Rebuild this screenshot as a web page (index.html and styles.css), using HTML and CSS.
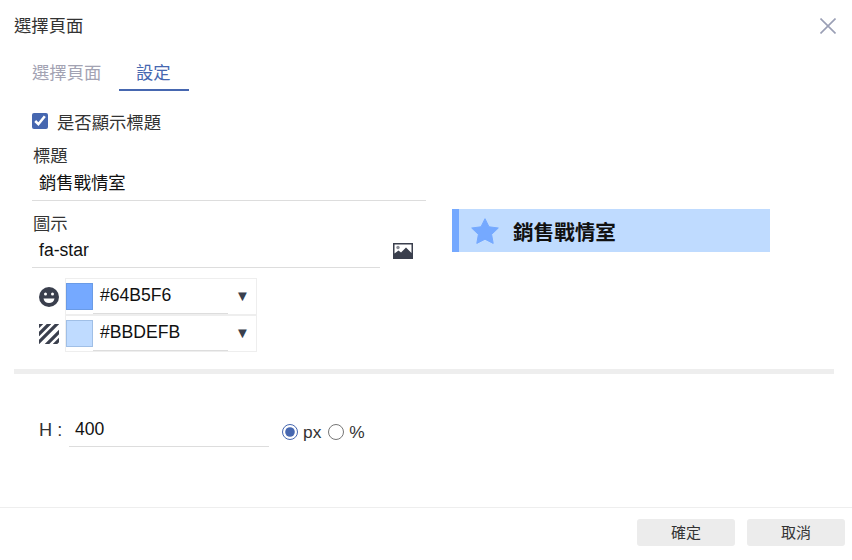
FILE: index.html
```html
<!DOCTYPE html>
<html lang="zh-Hant">
<head>
    <meta charset="UTF-8">
    <meta name="viewport" content="width=device-width, initial-scale=1.0">
    <title>選擇頁面</title>
    <link rel="stylesheet" href="styles.css">
</head>
<body>
    <div class="dialog">
        <div class="dialog-header">
            <span class="dialog-title">選擇頁面</span>
            <svg class="close-icon" viewBox="0 0 16 16" width="16" height="16">
                <path d="M0.5 0.5 L15.5 15.5 M15.5 0.5 L0.5 15.5" fill="none" stroke="#9a9fb5" stroke-width="1.6"/>
            </svg>
        </div>

        <div class="tabs">
            <div class="tab">選擇頁面</div>
            <div class="tab active">設定</div>
        </div>

        <div class="settings">
            <div class="settings-form">
                <label class="check-row">
                    <input type="checkbox" checked>
                    <span>是否顯示標題</span>
                </label>

                <div class="field-label title-label">標題</div>
                <div class="field-value title-value">銷售戰情室</div>

                <div class="field-label icon-label">圖示</div>
                <div class="icon-row">
                    <div class="field-value icon-value">fa-star</div>
                    <svg class="picture-icon" viewBox="0 0 20 16" width="20" height="16">
                        <path fill-rule="evenodd" fill="#3a3f4d" d="M0 0H20V16H0Z M1.5 1.5V10.5L5.5 7.5L8 9.5L13 4.5L18.5 10V1.5Z"/>
                        <circle cx="5" cy="4.5" r="1.7" fill="#8a8d96"/>
                    </svg>
                </div>

                <div class="color-rows">
                    <div class="color-row">
                        <svg class="color-icon" viewBox="0 0 20 20" width="20" height="20">
                            <circle cx="10" cy="10" r="10" fill="#3a3f4d"/>
                            <circle cx="6.5" cy="7" r="1.5" fill="#fff"/>
                            <circle cx="13.5" cy="7" r="1.5" fill="#fff"/>
                            <path d="M4.5 11.5H15.5C15 14.8 12.8 16 10 16C7.2 16 5 14.8 4.5 11.5Z" fill="#fff"/>
                        </svg>
                        <div class="color-picker">
                            <div class="swatch swatch-fg"></div>
                            <div class="color-value">#64B5F6</div>
                            <div class="color-arrow">▼</div>
                        </div>
                    </div>
                    <div class="color-row">
                        <svg class="color-icon" viewBox="0 0 20 20" width="20" height="20">
                            <path d="M-2 4L4 -2M-1 11L11 -1M-1 19L19 -1M6 22L22 6M14 22L22 14" stroke="#3a3f4d" stroke-width="3.2" fill="none"/>
                        </svg>
                        <div class="color-picker">
                            <div class="swatch swatch-bg"></div>
                            <div class="color-value">#BBDEFB</div>
                            <div class="color-arrow">▼</div>
                        </div>
                    </div>
                </div>
            </div>

            <div class="preview">
                <svg class="preview-star" viewBox="0 0 28 26" width="28" height="26">
                    <path fill="#75a9ff" stroke="#75a9ff" stroke-width="1" stroke-linejoin="round" d="M14 0.7L18 8.8L27.3 10L20.6 16.4L22.2 25.4L14 21.2L5.8 25.4L7.4 16.4L0.7 10L10 8.8Z"/>
                </svg>
                <span class="preview-title">銷售戰情室</span>
            </div>
        </div>

        <div class="divider"></div>

        <div class="height-row">
            <span class="height-label">H :</span>
            <div class="field-value height-value">400</div>
            <label class="unit"><input type="radio" name="unit" checked><span>px</span></label>
            <label class="unit"><input type="radio" name="unit"><span>%</span></label>
        </div>

        <div class="dialog-footer">
            <button class="btn">確定</button>
            <button class="btn">取消</button>
        </div>
    </div>
</body>
</html>
```

FILE: styles.css
```css
* {
    margin: 0;
    padding: 0;
    box-sizing: border-box;
    font-family: "Liberation Sans", "Noto Sans CJK TC", sans-serif;
}

body {
    background-color: #fff;
    color: #333;
    font-size: 17.33px;
}

.dialog {
    width: 852px;
    height: 560px;
    display: flex;
    flex-direction: column;
}

.dialog-header {
    display: flex;
    justify-content: space-between;
    align-items: center;
    height: 52px;
    padding: 0 16px 0 14px;
}

.dialog-title {
    padding-bottom: 4px;
}

.tabs {
    display: flex;
    height: 39px;
    margin-left: 14px;
}

.tab {
    width: 105px;
    padding: 7px 0 0 18px;
    color: #a3a3b3;
}

.tab.active {
    width: 70px;
    padding-left: 17px;
    color: #4667b0;
    border-bottom: 2px solid #4667b0;
}

.settings {
    display: flex;
    margin-top: 19px;
    padding-left: 32px;
}

.settings-form {
    width: 394px;
}

.check-row {
    display: flex;
    align-items: center;
    height: 22px;
}

.check-row input {
    width: 16px;
    height: 16px;
    margin-right: 9px;
    accent-color: #4667b0;
}

.field-label {
    line-height: 22px;
}

.title-label {
    margin-top: 13px;
    padding-left: 1px;
}

.field-value {
    color: #111;
    padding-left: 7px;
    border-bottom: 1px solid #ddd;
}

.title-value {
    height: 34px;
    line-height: 32px;
}

.icon-label {
    margin-top: 12px;
    padding-left: 1px;
}

.icon-row {
    display: flex;
    align-items: center;
}

.icon-value {
    width: 348px;
    height: 33px;
    font-size: 17.6px;
    line-height: 30px;
}

.picture-icon {
    margin: -2px 0 0 13px;
}

.color-rows {
    margin-top: 10px;
}

.color-row {
    display: flex;
    align-items: center;
}

.color-icon {
    margin: 0 6px 0 7px;
}

.color-picker {
    display: flex;
    width: 192px;
    height: 37px;
    border: 1px solid #eee;
    padding-top: 4px;
}

.swatch {
    width: 27px;
    height: 27px;
    border: 1px solid;
}

.swatch-fg {
    background-color: #75a9ff;
    border-color: #6a9be6;
}

.swatch-bg {
    background-color: #bfdbff;
    border-color: #a0bfe6;
}

.color-value {
    width: 135px;
    height: 31px;
    padding: 1px 0 0 7px;
    color: #111;
    font-size: 17.6px;
    line-height: 22px;
    border-bottom: 1px solid #ddd;
}

.color-arrow {
    margin-left: 7px;
    color: #3a3f4d;
    font-size: 15px;
    line-height: 26px;
}

.preview {
    display: flex;
    align-items: center;
    width: 318px;
    height: 43px;
    margin: 99px 0 0 26px;
    background-color: #bfdbff;
    border-left: 7px solid #75a9ff;
    padding-left: 12px;
}

.preview-title {
    margin-left: 14px;
    color: #111;
    font-size: 20.6px;
    font-weight: bold;
}

.divider {
    height: 5px;
    margin: 17px 18px 0 14px;
    background-color: #eee;
}

.height-row {
    display: flex;
    align-items: center;
    height: 112px;
    padding-left: 39px;
}

.height-label {
    width: 30px;
    font-size: 18.2px;
}

.height-value {
    width: 200px;
    height: 34px;
    padding-left: 6px;
    font-size: 17.6px;
    line-height: 32px;
}

.unit {
    display: flex;
    align-items: center;
    margin: 4px 0 0 13px;
}

.unit + .unit {
    margin-left: 7px;
}

.unit input {
    width: 16px;
    height: 16px;
    margin-right: 5px;
    accent-color: #4667b0;
}

.dialog-footer {
    display: flex;
    justify-content: flex-end;
    gap: 12px;
    margin-top: auto;
    height: 53px;
    padding: 11px 7px 0 0;
    border-top: 1px solid #eee;
}

.btn {
    width: 98px;
    height: 27px;
    padding-bottom: 2px;
    border: none;
    border-radius: 3px;
    background-color: #ececec;
    color: #333;
    font-size: 15px;
}
```
